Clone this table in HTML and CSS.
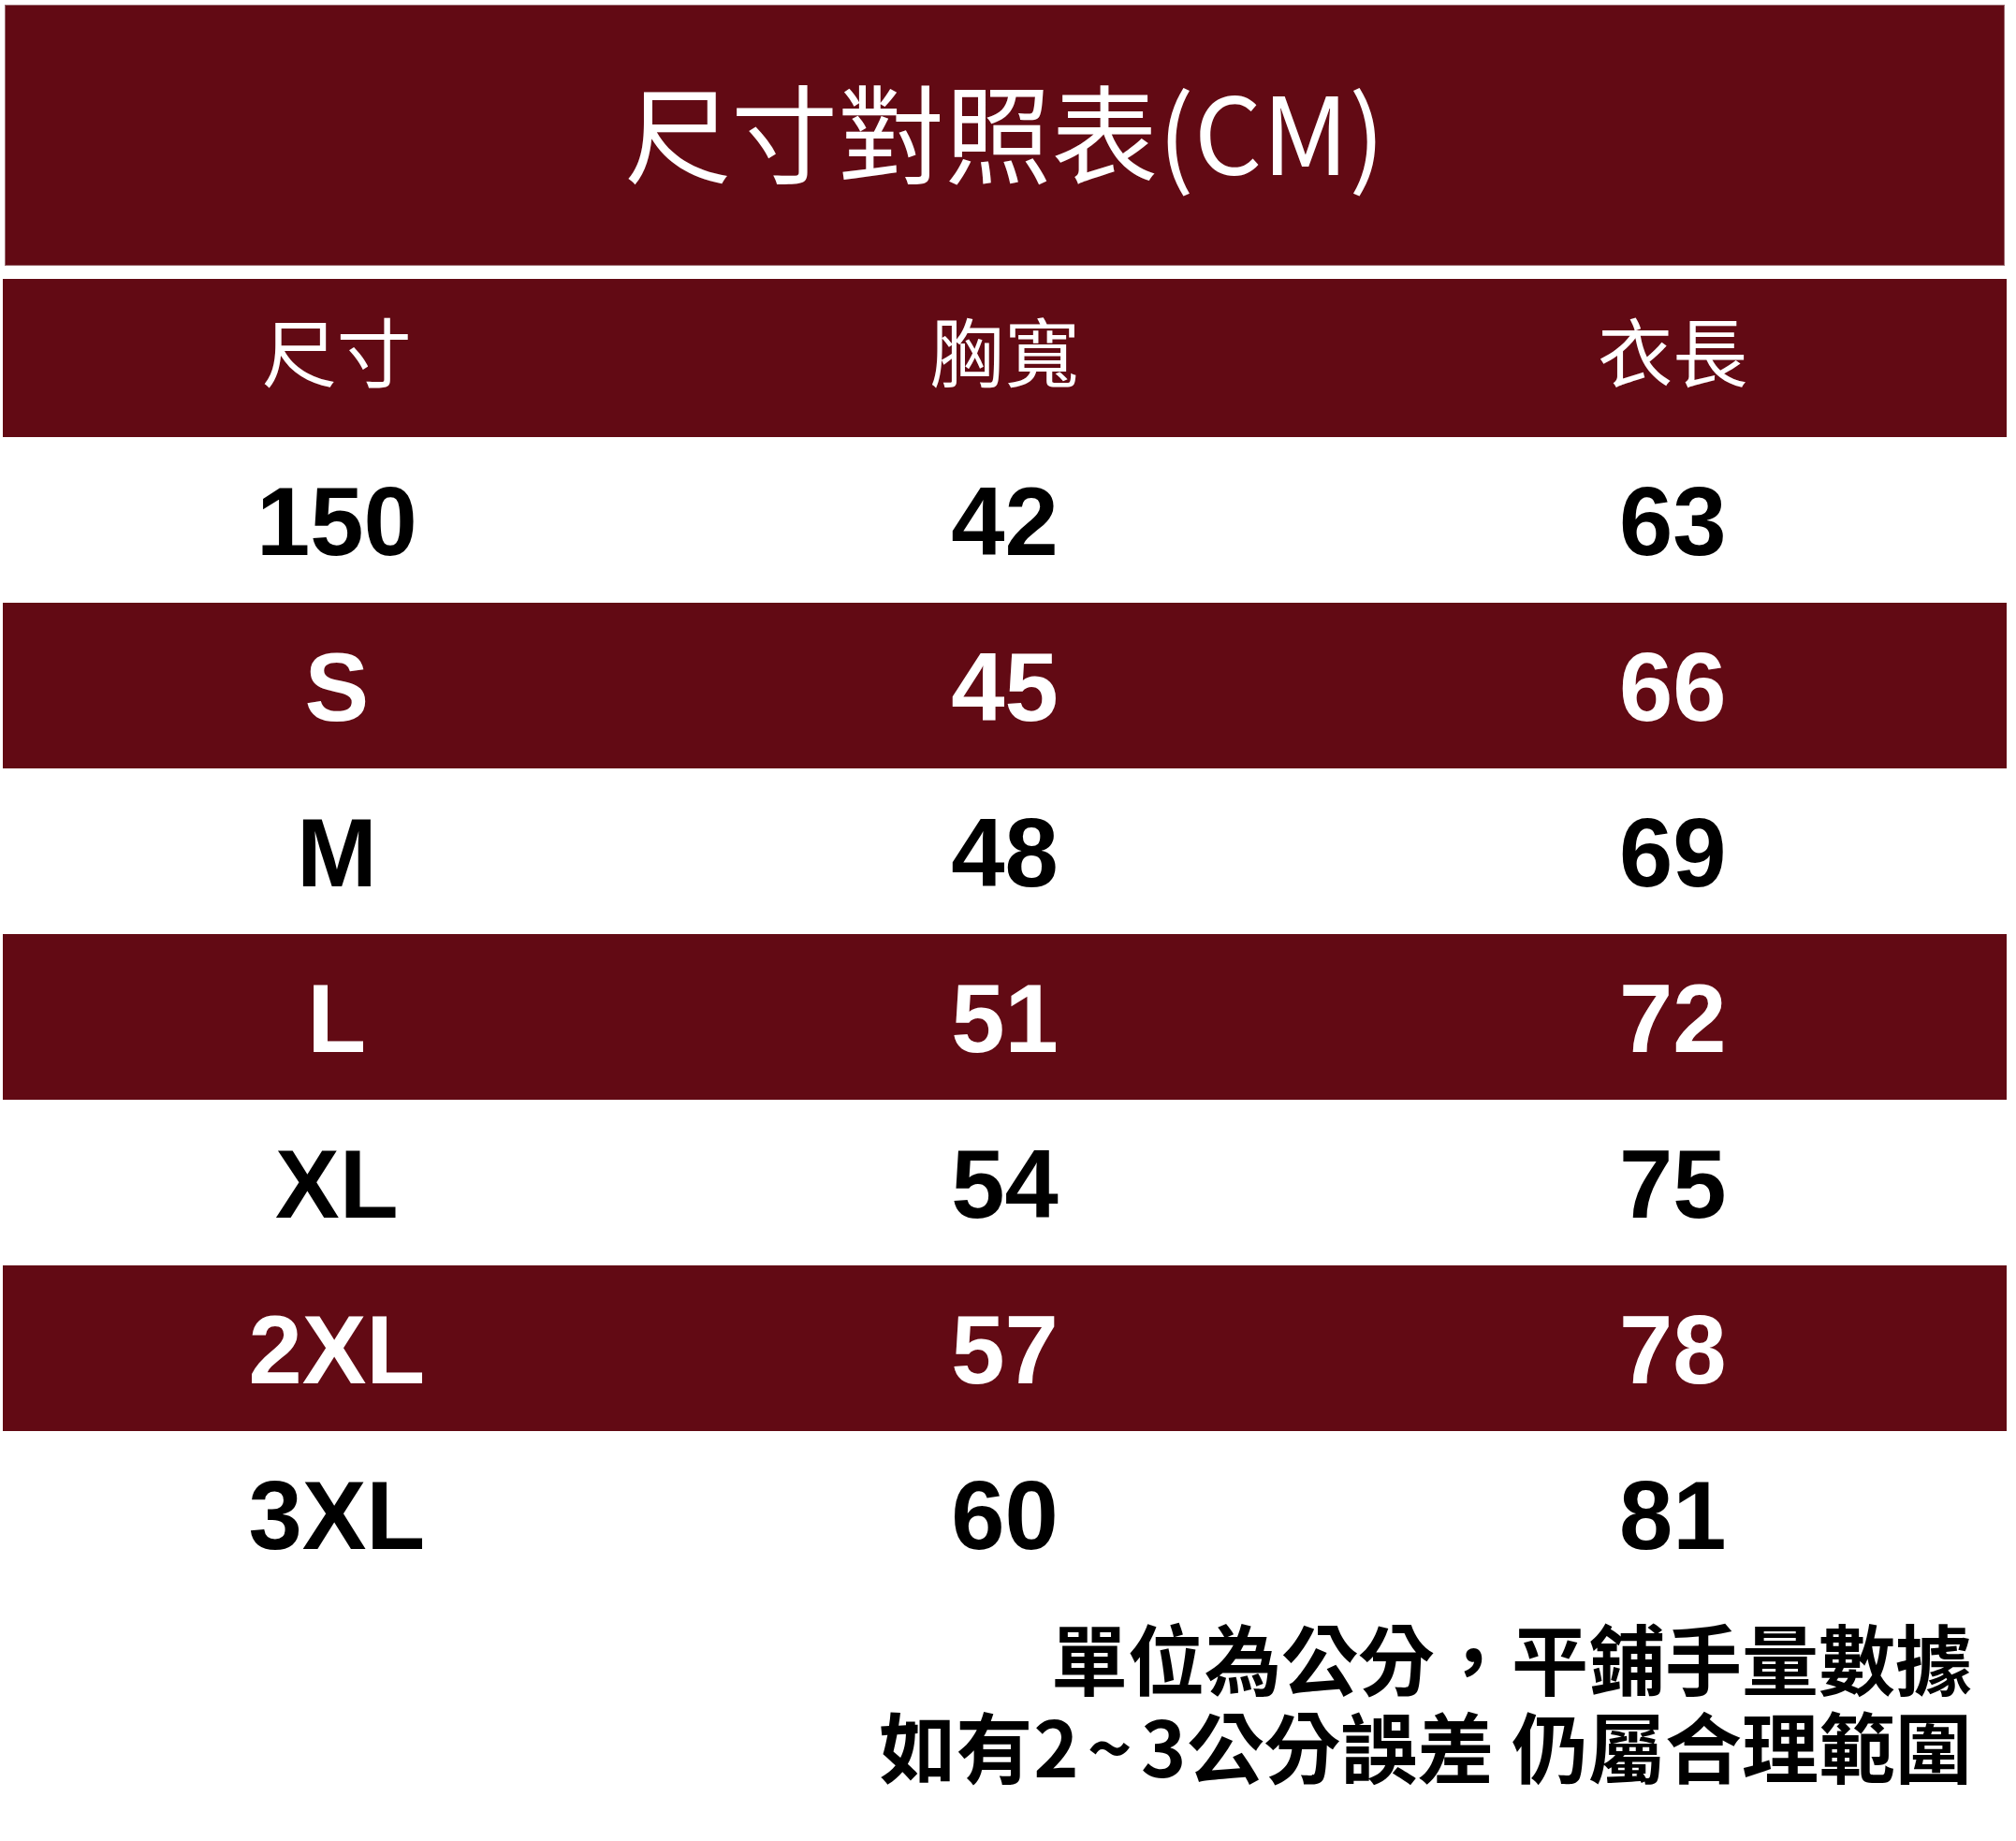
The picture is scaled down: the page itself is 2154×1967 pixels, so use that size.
FILE: index.html
```html
<!DOCTYPE html>
<html lang="zh-Hant">
<head>
<meta charset="utf-8">
<title>尺寸對照表(CM)</title>
<link rel="stylesheet" href="styles.css">
</head>
<body>
<main class="sheet">
  <header class="title">
    <h1 class="title-text">尺寸對照表(CM)</h1>
  </header>
  <section class="table">
    <div class="row head">
      <div class="cell">尺寸</div>
      <div class="cell">胸寬</div>
      <div class="cell">衣長</div>
    </div>
    <div class="row light">
      <div class="cell">150</div><div class="cell">42</div><div class="cell">63</div>
    </div>
    <div class="row dark">
      <div class="cell">S</div><div class="cell">45</div><div class="cell">66</div>
    </div>
    <div class="row light">
      <div class="cell">M</div><div class="cell">48</div><div class="cell">69</div>
    </div>
    <div class="row dark">
      <div class="cell">L</div><div class="cell">51</div><div class="cell">72</div>
    </div>
    <div class="row light">
      <div class="cell">XL</div><div class="cell">54</div><div class="cell">75</div>
    </div>
    <div class="row dark">
      <div class="cell">2XL</div><div class="cell">57</div><div class="cell">78</div>
    </div>
    <div class="row light">
      <div class="cell">3XL</div><div class="cell">60</div><div class="cell">81</div>
    </div>
  </section>
  <footer class="note">
    <p class="note-line">單位為公分，平鋪手量數據</p>
    <p class="note-line">如有<span class="digits">2~3</span>公分誤差 仍屬合理範圍</p>
  </footer>
</main>
</body>
</html>
```

FILE: styles.css
```css
* {
  box-sizing: border-box;
}

html, body {
  margin: 0;
  padding: 0;
  background: #ffffff;
}

body {
  width: 2154px;
  min-height: 1967px;
  font-family: "Noto Sans CJK TC", "Noto Sans", sans-serif;
}

.sheet {
  display: flex;
  flex-direction: column;
  padding-top: 5px;
}

.title {
  margin-left: 5px;
  width: 2137px;
  height: 279px;
  background: #620a14;
  border: 1px solid #9c6b71;
  display: flex;
  align-items: center;
  justify-content: center;
  padding-bottom: 14px;
}

.title-text {
  margin: 0;
  color: #ffffff;
  font-family: "Noto Sans CJK TC", sans-serif;
  font-weight: 400;
  font-size: 114px;
  line-height: 1;
  letter-spacing: 0;
}

.table {
  margin-top: 14px;
  margin-left: 3px;
  width: 2141px;
  display: flex;
  flex-direction: column;
}

.row {
  display: grid;
  grid-template-columns: 1fr 1fr 1fr;
  height: 177px;
}

.cell {
  display: flex;
  align-items: center;
  justify-content: center;
  font-family: "Liberation Sans", Arial, sans-serif;
  font-weight: 700;
  font-size: 103px;
  line-height: 1;
  padding-top: 3px;
}

.row.head {
  height: 169px;
  background: #620a14;
  color: #ffffff;
}

.row.head .cell {
  font-family: "Noto Sans CJK TC", sans-serif;
  font-weight: 400;
  font-size: 80px;
  padding-top: 0;
  padding-bottom: 22px;
}

.row.light {
  background: #ffffff;
  color: #000000;
}

.row.dark {
  background: #620a14;
  color: #ffffff;
}

.note {
  margin-top: 17px;
  padding-right: 47px;
  display: flex;
  flex-direction: column;
  align-items: flex-end;
}

.note-line {
  margin: 0;
  color: #000000;
  font-family: "Noto Sans CJK TC", sans-serif;
  font-weight: 700;
  font-size: 82px;
  line-height: 94px;
  white-space: nowrap;
}

.digits {
  letter-spacing: 9px;
  margin-right: -9px;
  padding-left: 1px;
  padding-right: 1px;
}
```
